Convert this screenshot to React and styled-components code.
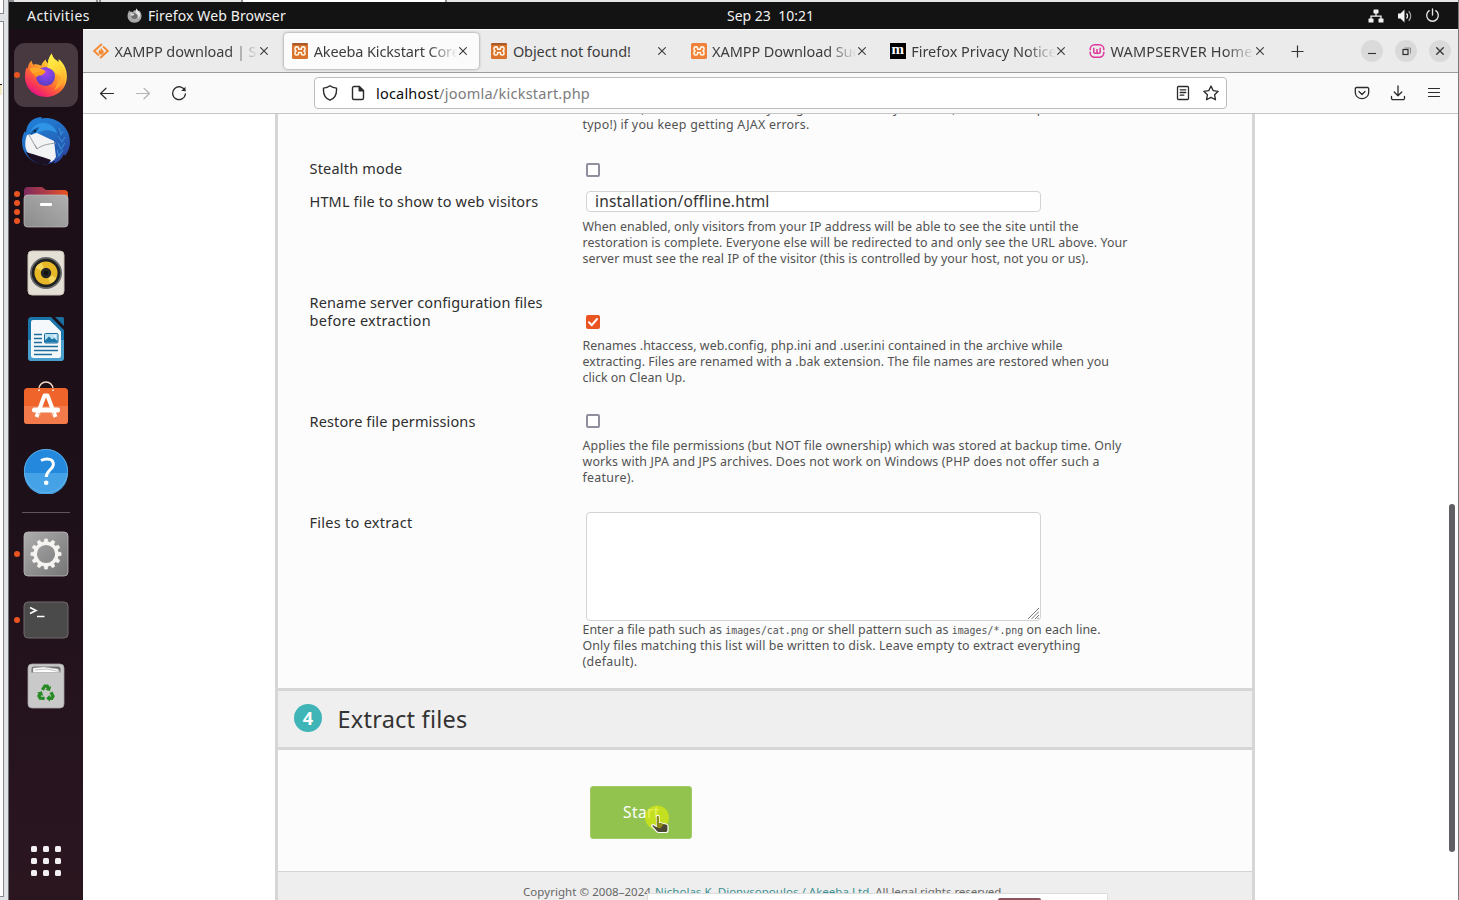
import React from "react";
import styled, { createGlobalStyle, css } from "styled-components";

const GlobalStyle = createGlobalStyle`
  *, *::before, *::after { box-sizing: border-box; }
  html, body { margin: 0; padding: 0; overflow: hidden; background: #dfe3e6; }
  body { font-family: "Noto Sans", "Open Sans", sans-serif; color: #333; }
  svg { display: block; flex: none; }
`;

/* ---------- frame ---------- */

const Screen = styled.div`
  width: 1459px;
  height: 900px;
  display: grid;
  grid-template-columns: 9px 1449px 1px;
  background: #dfe3e6;
  overflow: hidden;
`;

const BackWindow = styled.div`
  display: flex;
  flex-direction: column;
  gap: 7px;
  border-right: 1px solid #6f7275;
`;

const BackPane = styled.div`
  width: 4px;
  height: ${(p) => p.$h}px;
  background: #fdfdfd;
  border: solid #85888c;
  border-width: ${(p) => (p.$first ? "0 1px 1px 0" : "1px 1px 1px 0")};
  padding-top: ${(p) => (p.$first ? 0 : 62)}px;
`;

const BackMark = styled.div`
  width: 2px;
  height: 11px;
  background: #f5ecc8;
  border-top: 1px solid #111;
`;

const RightEdge = styled.div`
  background: #77797c;
`;

const Desktop = styled.div`
  display: grid;
  grid-template-rows: 2px 27px 871px;
  min-width: 0;
`;

const TopStrip = styled.div`
  display: flex;
  gap: 2px;
  padding-left: 5px;
  background: #8d9194;
`;

const StripPart = styled.div`
  width: ${(p) => p.$w}px;
  background: ${(p) => p.$c};
`;

const Label = styled.span`
  white-space: pre;
  letter-spacing: ${(p) => p.$ls || 0}px;
`;

const TopBar = styled.header`
  display: grid;
  grid-template-columns: 1fr auto 1fr;
  align-items: center;
  background: #131313;
  color: #f2f2f2;
  font-size: 14px;
  line-height: 26px;
`;

const TopLeft = styled.div`
  display: flex;
  align-items: center;
  padding-left: 18px;
`;

const AppName = styled.div`
  display: flex;
  align-items: center;
  gap: 6px;
  margin-left: 37px;
`;

const Clock = styled.div`
  margin-left: 74px;
`;

const Tray = styled.div`
  display: flex;
  justify-content: flex-end;
  align-items: center;
  gap: 12.5px;
  padding-right: 18px;
`;

const Body = styled.div`
  display: grid;
  grid-template-columns: 74px 1375px;
`;

/* ---------- dock ---------- */

const Dock = styled.nav`
  display: flex;
  flex-direction: column;
  align-items: center;
  padding-top: 14px;
  height: 871px;
  background: linear-gradient(#1b0e17, #1e1019 55%, #2b1620);
`;

const DockItem = styled.div`
  display: grid;
  grid-template-columns: 5px 64px 5px;
  align-items: center;
  width: 74px;
  height: 64px;
  margin-bottom: 2px;
`;

const Dots = styled.div`
  display: flex;
  flex-direction: column;
  gap: 3px;
  padding-left: 5px;
  width: 12px;
  z-index: 1;
`;

const Dot = styled.i`
  width: 6px;
  height: 6px;
  border-radius: 50%;
  background: #e95420;
`;

const DockTile = styled.div`
  display: grid;
  place-items: center;
  width: 64px;
  height: 64px;
  border-radius: 11px;
  background: ${(p) => (p.$active ? "#47393f" : "transparent")};
`;

const DockRule = styled.div`
  width: 48px;
  height: 1px;
  margin: 7px 0 9px;
  background: #5f555b;
`;

const AppGrid = styled.div`
  display: grid;
  grid-template-columns: repeat(3, 6px);
  gap: 6px;
  margin-top: 126px;
`;

const AppDot = styled.i`
  height: 6px;
  border-radius: 1.5px;
  background: #f1eff0;
`;

/* ---------- browser chrome ---------- */

const Browser = styled.main`
  display: grid;
  grid-template-rows: 44px 41px 786px;
  background: #fff;
`;

const TabBar = styled.div`
  display: flex;
  align-items: center;
  padding-left: 2px;
  background: #ebebeb;
  border-top: 1px solid #fff;
  border-bottom: 1px solid #9c9c9c;
  font-size: 14.5px;
  color: #3d3d3d;
`;

const Tab = styled.div`
  display: flex;
  align-items: center;
  width: 195px;
  height: 36px;
  margin-right: 4.2px;
  padding: 0 12px 0 8px;
  border-radius: 4px;
  ${(p) =>
    p.$active &&
    css`
      background: #fbfbfb;
      box-shadow: 0 0 3px rgba(0, 0, 0, 0.45);
    `}
`;

const TabTitle = styled.div`
  flex: 1;
  margin: 0 1px 0 5.500px;
  overflow: hidden;
  white-space: nowrap;
  ${(p) =>
    p.$fade &&
    css`
      mask-image: linear-gradient(90deg, #000 calc(100% - 30px), transparent);
    `}
`;

const NewTab = styled.div`
  margin-left: 11px;
`;

const WindowButtons = styled.div`
  display: flex;
  gap: 12px;
  margin-left: auto;
  padding-right: 7px;
`;

const WindowButton = styled.div`
  display: grid;
  place-items: center;
  width: 22px;
  height: 22px;
  border-radius: 50%;
  background: #dadada;
`;

const Toolbar = styled.div`
  display: grid;
  grid-template-columns: 231px 913px 1fr;
  align-items: center;
  background: #fafafa;
  border-bottom: 1px solid #c6c6c6;
`;

const NavButtons = styled.div`
  display: flex;
  gap: 20px;
  padding-left: 16px;
`;

const UrlBar = styled.div`
  display: flex;
  align-items: center;
  height: 32px;
  padding: 0 7px 0 7px;
  background: #fff;
  border: 1px solid #bdbdbd;
  border-radius: 4px;
  font-size: 14.5px;
`;

const UrlText = styled.div`
  flex: 1;
  margin-left: 10px;
  color: #7c7c7c;
`;

const Host = styled(Label)`
  color: #0c0c0c;
`;

const UrlIcons = styled.div`
  display: flex;
  gap: 12px;
`;

const ShieldSlot = styled.div`
  margin-right: 12px;
`;

const ToolIcons = styled.div`
  display: flex;
  justify-content: flex-end;
  gap: 20px;
  padding-right: 16px;
`;

/* ---------- page ---------- */

const Page = styled.section`
  display: flex;
  height: 786px;
  overflow: hidden;
`;

const Sheet = styled.div`
  width: 980px;
  height: 786px;
  margin-left: 192px;
  background: #fcfcfc;
  border: solid #d6d6d6;
  border-width: 0 3px;
`;

const ScrollTrack = styled.div`
  margin-left: auto;
  padding: 390px 3px 0 0;
`;

const ScrollThumb = styled.div`
  width: 6px;
  height: 348px;
  border-radius: 3px;
  background: #606064;
`;

const FormArea = styled.div`
  height: 574px;
  overflow: hidden;
`;

const Row = styled.div`
  display: grid;
  grid-template-columns: 273px 1fr;
  height: ${(p) => p.$h}px;
  padding-left: 31.5px;
`;

const RowLabel = styled.div`
  margin-top: ${(p) => (p.$top || 0) - 1}px;
  font-size: 14.5px;
  line-height: 18px;
  color: #2e2e2e;
  display: flex;
  flex-direction: column;
`;

const Field = styled.div`
  display: flex;
  flex-direction: column;
  align-items: flex-start;
  padding-top: ${(p) => p.$top || 0}px;
`;

const Help = styled.div`
  display: flex;
  flex-direction: column;
  margin-top: ${(p) => p.$top || 0}px;
  font-size: 12.4px;
  line-height: 16px;
  color: #525252;
`;

const HelpLine = styled.div`
  white-space: pre;
  height: 16px;
  letter-spacing: ${(p) => p.$ls || 0}px;
`;

const Code = styled.code`
  font-family: "DejaVu Sans Mono", monospace;
  font-size: 9.9px;
  letter-spacing: ${(p) => p.$ls || 0}px;
`;

const Checkbox = styled.div`
  display: grid;
  place-items: center;
  width: 14px;
  height: 14px;
  margin-left: 3.5px;
  border-radius: 2px;
  border: ${(p) => (p.$checked ? "0" : "2px solid #8f8f9d")};
  background: ${(p) => (p.$checked ? "#e95420" : "#fff")};
`;

const TextInput = styled.div`
  width: 455px;
  height: 21px;
  margin-left: 3.5px;
  padding-left: 8px;
  background: #fff;
  border: 1px solid #d3d3d3;
  border-radius: 4px;
  font-size: 15.5px;
  line-height: 19px;
  color: #333;
`;

const TextArea = styled.div`
  display: flex;
  justify-content: flex-end;
  align-items: flex-end;
  width: 455px;
  height: 109px;
  margin-left: 3.5px;
  padding: 1px;
  background: #fff;
  border: 1px solid #d3d3d3;
  border-radius: 4px;
`;

const StepHeader = styled.div`
  display: flex;
  align-items: center;
  gap: 15.5px;
  height: 62px;
  padding: 0 0 3px 16px;
  background: #efefef;
  border: solid #d6d6d6;
  border-width: 3px 0;
`;

const StepNumber = styled.div`
  width: 28px;
  height: 28px;
  border-radius: 50%;
  background: #40b5b8;
  color: #fff;
  font-size: 18px;
  font-weight: 700;
  line-height: 28px;
  text-align: center;
`;

const StepTitle = styled.h2`
  margin: 2px 0 0;
  font-size: 23.5px;
  font-weight: 400;
  line-height: 30px;
  letter-spacing: 0.23px;
  color: #333;
`;

const StepBody = styled.div`
  height: 121px;
  padding: 36px 0 0 312px;
`;

const StartButton = styled.div`
  position: relative;
  width: 102px;
  height: 53px;
  padding-left: 32px;
  background: #93c34f;
  border: 1px solid #a3cc69;
  border-radius: 3px;
  color: #fff;
  font-size: 15.5px;
  line-height: 51px;
`;

const Pointer = styled.div`
  position: absolute;
  left: 53px;
  top: 17px;
`;

const Footer = styled.footer`
  position: relative;
  height: 29px;
  padding: 12px 0 0 245px;
  background: #eee;
  border-top: 1px solid #d3d3d3;
  color: #666;
  font-size: 11.5px;
  line-height: 16px;
  white-space: pre;
`;

const FooterLink = styled(Label)`
  margin-left: 4px;
  color: #3c9092;
`;

const Notice = styled.div`
  position: absolute;
  left: 369px;
  top: 21px;
  width: 461px;
  height: 8px;
  padding: 4px 66px 0 0;
  background: #fff;
  border: 1px solid #dcdcdc;
  border-bottom: 0;
`;

const NoticeTab = styled.div`
  width: 43px;
  height: 3px;
  margin-left: auto;
  border-radius: 2px 2px 0 0;
  background: #8e5660;
`;

/* ---------- icons ---------- */

const FirefoxIcon = () => (
  <svg width="44" height="46" viewBox="0 0 44 46">
    <defs>
      <linearGradient id="fxBody" x1="0.8" y1="0.1" x2="0.25" y2="0.95">
        <stop offset="0" stopColor="#fff04a" />
        <stop offset="0.35" stopColor="#ffb32c" />
        <stop offset="0.6" stopColor="#ff6a32" />
        <stop offset="0.85" stopColor="#f7325c" />
        <stop offset="1" stopColor="#e21587" />
      </linearGradient>
      <radialGradient id="fxGlobe" cx="0.5" cy="0.3" r="0.75">
        <stop offset="0" stopColor="#a844ee" />
        <stop offset="0.55" stopColor="#7143dc" />
        <stop offset="1" stopColor="#5a3bb8" />
      </radialGradient>
      <linearGradient id="fxFlame" x1="0.3" y1="0" x2="0.7" y2="1">
        <stop offset="0" stopColor="#fff44c" />
        <stop offset="0.5" stopColor="#ffd536" />
        <stop offset="1" stopColor="#ff9a2a" />
      </linearGradient>
    </defs>
    <path d="M27.8 1.5c.6 4.200 3.500 6.300 6.800 8.600.1-1.200-.1-2 .1-3 5.500 4.500 8.200 10.700 8.200 17.400C42.900 36.300 33.600 45 22 45S1 36.200 1 24.800c0-4 .6-6.800 1.600-9.200l1.200.8c.2-3.200 1.600-5.900 3.700-8 .4 2 1 3.300 1.900 4.300 2.600-.9 5.400-.5 7.900 1 .8-2.600 2.400-4.600 4.600-6.100 0 1.700.7 2.600 1.700 3.800.6-3.900 2-7.300 4.200-9.900z" fill="url(#fxBody)" />
    <circle cx="21.500" cy="24.500" r="9.500" fill="url(#fxGlobe)" />
    <path d="M9.400 17.200c4.600.2 9.500 1.300 12.300 2.200-1.500 2.600-4 4.300-7.300 4.200-1.600 2.200-3.200 1.200-4.200-.3-.9-1.700-1.200-3.900-.8-6.100z" fill="#ff9820" />
    <path d="M5.300 16.500c3.800-1.900 8-.9 12.900.8 1.600.6 2.600 1.300 3.500 2.100-5.100-.7-9.300.2-13.200 2.400z" fill="#ffa82b" />
    <path d="M27.800 1.500c.6 4.200 3.500 6.300 6.800 8.600 4.500 3.500 6.700 9 5.700 14.900-1 6.400-5 11.200-10.300 13.200 3.700-5.100 4.800-11.400 1.600-16.900-1.500-2.700-4.200-4.600-8-5.600-.1-5.600 1.300-10.600 4.200-14.200z" fill="url(#fxFlame)" opacity="0.9" />
    <path d="M31 21c2 5 .7 10.500-4.300 13.600 4.900.1 9.300-3 10.300-9.600" fill="#ff8a2d" opacity="0.45" />
  </svg>
);

const FirefoxSmall = () => (
  <svg width="15" height="15" viewBox="0 0 16 16">
    <path d="M10.500.6c.2 1.600 1 2.300 2.300 3.100l.1-1c1.700 1.500 2.600 3.500 2.600 5.800 0 4.100-3.300 7.200-7.500 7.200S.6 12.600.6 8.500c0-1.500.2-2.700.8-3.700.2-1 .6-1.700 1.200-2.400.2.800.4 1.300.8 1.600.9-.3 2-.1 2.900.4.4-1 .9-1.700 1.800-2.200 0 .6.3 1 .7 1.300.2-1.200.8-2.200 1.700-2.900z" fill="#a9a9a9" />
    <circle cx="7.800" cy="8.400" r="3.200" fill="#6d6d6d" />
    <path d="M3 6c2-.6 3.500-.1 4.900.6-.6 1.200-1.800 1.600-3 1.600z" fill="#d8d8d8" />
    <path d="M10.500.6c.2 1.600 1 2.300 2.300 3.100 1.600 2 1.800 5.200-.6 7.800.3-3-.7-5-3.100-6-.2-2 .3-3.700 1.400-4.900z" fill="#e4e4e4" />
  </svg>
);

const ThunderbirdIcon = () => (
  <svg width="50" height="50" viewBox="0 0 50 50">
    <defs>
      <linearGradient id="tbBody" x1="0.2" y1="0" x2="0.8" y2="1">
        <stop offset="0" stopColor="#1f80d8" />
        <stop offset="0.55" stopColor="#2469bd" />
        <stop offset="1" stopColor="#2b3f9c" />
      </linearGradient>
    </defs>
    <path d="M10 5c4-3 7-4 11-4l-1 1.500C34-.5 49 10 49 26c0 5-2 10-5 14l-1-2c-2 5-6 8-10 10l1-3c-4 3-9 4-14 3C8 46 1 36 1 26c0-4 1-8 3-11l1 2c0-5 2-9 5-12z" fill="url(#tbBody)" />
    <path d="M9 17C12 8 21 4 30 9c3 2 5 5 6 8-6-3-11-4-17-1-4 2-7 3-10 1z" fill="#2f93e6" />
    <path d="M6 19l10-2 17 8 2 16c-1 2-3 4-5 5L7 37C3 32 4 24 6 19z" fill="#f2f3f5" />
    <path d="M8 19l8 14c5-4 11-5 19-6M16 33l-2-4" fill="none" stroke="#8f9298" strokeWidth="0.9" />
    <path d="M5 36c6 2 14 4 25 8l-3 4C17 50 8 44 5 36z" fill="#1c1025" />
    <path d="M9 18c2-4 5-6 9-7-1 3-3 6-8 8z" fill="#135aa3" />
    <circle cx="14" cy="15" r="1.200" fill="#0b2748" />
    <path d="M36 12c7 6 9 14 6 22-2 6-5 8-8 9 2-3 3-7 2-12 1-6 2-12 0-19z" fill="#235fb4" />
    <path d="M38 12l2 7 2-4M37 20l4 6 3-5M37 27l3 6 4-6M36 34l2 6 4-6" fill="none" stroke="#3f93dc" strokeWidth="1.100" opacity="0.8" />
  </svg>
);

const FilesIcon = () => (
  <svg width="46" height="42" viewBox="0 0 46 42">
    <defs>
      <linearGradient id="flBack" x1="0" x2="1">
        <stop offset="0" stopColor="#7d2a5c" />
        <stop offset="0.5" stopColor="#b03c48" />
        <stop offset="1" stopColor="#e95420" />
      </linearGradient>
      <linearGradient id="flFront" x1="0" y1="1" x2="1" y2="0">
        <stop offset="0" stopColor="#8b8b8b" />
        <stop offset="1" stopColor="#b0b0b0" />
      </linearGradient>
    </defs>
    <path d="M1 5a4 4 0 0 1 4-4h14l4 3h18a4 4 0 0 1 4 4v14H1z" fill="url(#flBack)" />
    <rect x="1" y="9" width="44" height="32" rx="3.500" fill="url(#flFront)" stroke="#c1bfbf" strokeWidth="0.700" />
    <rect x="17" y="17" width="12" height="3" rx="1" fill="#fff" />
  </svg>
);

const RhythmboxIcon = () => (
  <svg width="38" height="46" viewBox="0 0 38 46">
    <rect x="1" y="1" width="36" height="44" rx="4" fill="#e5e0d5" stroke="#c9c3b8" strokeWidth="1" />
    <circle cx="19" cy="23" r="16" fill="#68696a" />
    <circle cx="19" cy="23" r="14.300" fill="#202122" />
    <circle cx="19" cy="23" r="11.500" fill="#e7b928" />
    <path d="M19 23L8.500 18a11.500 11.500 0 0 1 6-5.600z" fill="#f5d55a" />
    <path d="M19 23l10.500 5a11.500 11.500 0 0 1-6 5.600z" fill="#f5d55a" />
    <circle cx="19" cy="23" r="5.200" fill="#252526" />
    <circle cx="19" cy="23" r="2.200" fill="#101010" />
  </svg>
);

const WriterIcon = () => (
  <svg width="38" height="46" viewBox="0 0 38 46">
    <path d="M4.500 1H24l13 13v27.500a3.500 3.500 0 0 1-3.500 3.500h-29A3.500 3.500 0 0 1 1 41.500v-37A3.500 3.500 0 0 1 4.500 1z" fill="#1a76a9" />
    <path d="M1 24h36v17.500a3.500 3.500 0 0 1-3.500 3.500h-29A3.500 3.500 0 0 1 1 41.500z" fill="#4aa0cc" />
    <path d="M28 1h7.500A1.500 1.500 0 0 1 37 2.500V10z" fill="#1a6f9f" />
    <path d="M6 4h16.500L34 15.500V39.500a2.500 2.500 0 0 1-2.500 2.500H6.500A2.500 2.500 0 0 1 4 39.500V6a2 2 0 0 1 2-2z" fill="#f5f8fa" />
    <path d="M7 18.500h8M7 22.500h8M7 26.500h8M7 30.500h24M7 34.500h24M7 38.500h18" stroke="#1b6d9b" strokeWidth="1.700" />
    <rect x="17.500" y="17.500" width="13.500" height="9.500" rx="1" fill="#b9e0f3" stroke="#1b6d9b" strokeWidth="1" />
    <path d="M18 26.500v-2l4-4 3 3 2-1.500 3.500 3v1.500z" fill="#1b76a9" />
    <circle cx="28" cy="20" r="1.100" fill="#f5f8fa" />
  </svg>
);

const SoftwareIcon = () => (
  <svg width="46" height="48" viewBox="0 0 46 48">
    <path d="M16 10V8a7 7 0 0 1 14 0v2" fill="none" stroke="#f6d9c7" strokeWidth="1.600" />
    <rect x="1" y="7" width="44" height="36" rx="3.500" fill="#ef642b" />
    <path d="M1 25h44v14.500a3.500 3.500 0 0 1-3.500 3.500h-37A3.500 3.500 0 0 1 1 39.500z" fill="#f37b4b" />
    <path d="M16 10V8.500M30 10V8.500" stroke="#fff" strokeWidth="1.600" />
    <path d="M13.500 36L21.500 14.500h3L32.500 36" fill="none" stroke="#fff" strokeWidth="4" strokeLinejoin="round" />
    <rect x="9" y="26.500" width="28" height="5" rx="2.500" fill="#fff" />
    <path d="M15 32.500l3 1M28 33.500l3-1" stroke="#f1a584" strokeWidth="1" />
  </svg>
);

const HelpIcon = () => (
  <svg width="46" height="46" viewBox="0 0 46 46">
    <circle cx="23" cy="23" r="22" fill="#2489dc" />
    <path d="M1 25a22 22 0 0 0 44 0z" fill="#45a2e6" />
    <circle cx="23" cy="23" r="21.600" fill="none" stroke="#67b3ea" strokeWidth="0.800" />
    <path d="M18 12.500c6.500-3.300 12.800-1 12.300 4.300-.4 4.700-7 5.700-7 12.200" fill="none" stroke="#fff" strokeWidth="3" />
    <circle cx="23.200" cy="34.800" r="2.300" fill="#fff" />
  </svg>
);

const TEETH = [0, 30, 60, 90, 120, 150, 180, 210, 240, 270, 300, 330];

const SettingsIcon = () => (
  <svg width="46" height="46" viewBox="0 0 46 46">
    <defs>
      <linearGradient id="stBack" x1="0" y1="0" x2="1" y2="1">
        <stop offset="0" stopColor="#adadad" />
        <stop offset="1" stopColor="#757575" />
      </linearGradient>
    </defs>
    <rect x="1" y="1" width="44" height="44" rx="4" fill="url(#stBack)" stroke="#bcbaba" strokeWidth="0.800" />
    <circle cx="23" cy="23" r="10.800" fill="none" stroke="#f6f4f1" strokeWidth="3.400" />
    {TEETH.map((a) => (
      <path key={a} d="M21 11.500l.6-3.600h2.800l.6 3.600z" fill="#f6f4f1" stroke="#f6f4f1" strokeWidth="0.600" transform={`rotate(${a} 23 23)`} />
    ))}
  </svg>
);

const TerminalIcon = () => (
  <svg width="46" height="38" viewBox="0 0 46 38">
    <rect x="1" y="1" width="44" height="36" rx="4" fill="#4a4a4a" stroke="#6e6a6c" strokeWidth="1" />
    <path d="M7 6.500l6 3-6 3" fill="none" stroke="#fff" strokeWidth="1.600" />
    <path d="M14 15.500h7.500" stroke="#fff" strokeWidth="1.500" />
  </svg>
);

const RECYCLE = [0, 120, 240];

const TrashIcon = () => (
  <svg width="38" height="46" viewBox="0 0 38 46">
    <rect x="1" y="1" width="36" height="44" rx="4" fill="#c9c9c9" stroke="#a5a3a4" strokeWidth="0.800" />
    <path d="M4.500 9.500V6a2.500 2.500 0 0 1 2.500-2.500h24A2.500 2.500 0 0 1 33.500 6v3.500z" fill="#6e6e6e" />
    <path d="M6 9.500V5l11-1 14 2 2 3.500z" fill="#fdfdfd" stroke="#aaa" strokeWidth="0.500" />
    <path d="M8 7l12-1 12 2.500" fill="none" stroke="#999" strokeWidth="0.600" />
    {RECYCLE.map((a) => (
      <g key={a} fill="#278a24" transform={`rotate(${a} 19 30.500)`}>
        <path d="M14 26l3-4.500h4.200l1.500 2.400 1.600-.9-1.400 5-4.700-1.200 1.600-.9-1-1.600-2 3.400z" />
      </g>
    ))}
  </svg>
);

const SourceForgeIcon = () => (
  <svg width="16" height="16" viewBox="0 0 16 16">
    <path d="M8.800 1L1.200 8l4.800 4.600M7.200 15L14.800 8 10 3.400" fill="none" stroke="#f58a35" strokeWidth="1.900" />
    <path d="M8.200 4.500c.2 2 2.500 2.400 2.500 4.500a2.600 2.600 0 0 1-5.200 0c0-1.200.6-1.700 1-2.400.2.700.4 1 .9 1.200.4-1.300.2-2.200.8-3.300z" fill="#f58a35" />
  </svg>
);

const XamppIcon = ({ dark }) => (
  <svg width="16" height="16" viewBox="0 0 16 16">
    <rect width="16" height="16" rx="1.500" fill={dark ? "#d9722c" : "#f0813a"} />
    {dark && <path d="M0 1.500A1.500 1.500 0 0 1 1.500 0h13A1.500 1.500 0 0 1 16 1.500V2H0z" fill="#a85a28" />}
    <path d="M6.600 6.300V5.300a1.400 1.400 0 0 0-1.400-1.400H4.400A1.500 1.500 0 0 0 3 5.400v.8C3 7.200 3.500 8 4.300 8 3.500 8 3 8.700 3 9.700v.8A1.500 1.500 0 0 0 4.400 12h.8a1.400 1.400 0 0 0 1.400-1.400V9.500h2.800v1.100a1.400 1.400 0 0 0 1.400 1.400h.8a1.500 1.500 0 0 0 1.400-1.500v-.8c0-1-.5-1.700-1.300-1.700.8 0 1.300-.8 1.300-1.800v-.8a1.500 1.500 0 0 0-1.400-1.500h-.8a1.400 1.400 0 0 0-1.400 1.400v1z" fill="none" stroke="#fff6e6" strokeWidth="1.600" strokeLinejoin="round" />
  </svg>
);

const MozillaBox = styled.div`
  width: 16px;
  height: 16px;
  flex: none;
  background: #000;
  color: #fff;
  font: 700 15px/12px "Liberation Serif", serif;
  text-align: center;
`;

const WampIcon = () => (
  <svg width="16" height="16" viewBox="0 0 16 16">
    <rect x="1.200" y="1.700" width="13.600" height="12.600" rx="4.500" fill="none" stroke="#e0359c" strokeWidth="1.500" />
    <path d="M0 8h2M14 8h2" stroke="#ebebeb" strokeWidth="1.500" />
    <path d="M4.800 4.800v4.200a1.300 1.300 0 0 0 1.300 1.300h3.800a1.300 1.300 0 0 0 1.300-1.300V4.800M8 6v4" fill="none" stroke="#e0359c" strokeWidth="1.500" />
  </svg>
);

const CloseIcon = ({ size = 8, w = 1.1 }) => (
  <svg width={size} height={size} viewBox="0 0 8 8">
    <path d="M.3.300l7.400 7.400M7.700.300L.3 7.700" stroke="#3a3a3a" strokeWidth={w} />
  </svg>
);

const Stroke = ({ d, color = "#2b2b2b", w = 1.3, size = 16, children }) => (
  <svg width={size} height={size} viewBox="0 0 16 16" fill="none" stroke={color} strokeWidth={w} strokeLinecap="round" strokeLinejoin="round">
    <path d={d} />
    {children}
  </svg>
);

const NetworkIcon = () => (
  <svg width="16" height="16" viewBox="0 0 16 16">
    <path d="M8 4v4M3 12V8.200h10V12" fill="none" stroke="#f2f2f2" strokeWidth="1.300" />
    <rect x="5.500" y="1.500" width="5" height="4" rx="0.500" fill="#f2f2f2" />
    <rect x="0.500" y="10.500" width="5" height="4" rx="0.500" fill="#f2f2f2" />
    <rect x="10.500" y="10.500" width="5" height="4" rx="0.500" fill="#f2f2f2" />
  </svg>
);

const VolumeIcon = () => (
  <svg width="16" height="16" viewBox="0 0 16 16">
    <path d="M1 5.500h2.500L7.500 1.500v13l-4-4H1z" fill="#f2f2f2" />
    <path d="M9.500 5.500a3.500 3.500 0 0 1 0 5" fill="none" stroke="#f2f2f2" strokeWidth="1.300" />
    <path d="M11.700 3.300a6.500 6.500 0 0 1 0 9.400" fill="none" stroke="#a5a5a5" strokeWidth="1.200" />
  </svg>
);

const HandCursor = () => (
  <svg width="30" height="30" viewBox="0 0 30 30">
    <circle cx="13" cy="13.500" r="12" fill="#dcea0a" fillOpacity="0.680" />
    <path d="M12.500 12.500c0-1.600 2.500-1.600 2.500 0v6l7 1.500c1.500.3 2 1 2 2v4c0 1.500-.8 2.500-2 2.500h-7c-1.500 0-2-.6-3-1.600l-4-4.500c-1-1.300.8-2.400 2-1.500l2.500 1.600z" fill="#4a4733" stroke="#fff" strokeWidth="1.200" strokeLinejoin="round" />
    <path d="M12.600 20v-7c.1-1.200 2.200-1.200 2.300 0v6l5 1-3.500 4.500-3.400-1z" fill="#8c8a15" />
  </svg>
);

/* ---------- data ---------- */

const DOCK_TOP = [
  { id: "firefox", icon: <FirefoxIcon />, dots: 1, active: true },
  { id: "thunderbird", icon: <ThunderbirdIcon />, dots: 0 },
  { id: "files", icon: <FilesIcon />, dots: 4 },
  { id: "rhythmbox", icon: <RhythmboxIcon />, dots: 0 },
  { id: "writer", icon: <WriterIcon />, dots: 0 },
  { id: "software", icon: <SoftwareIcon />, dots: 0 },
  { id: "help", icon: <HelpIcon />, dots: 0 },
];

const DOCK_BOTTOM = [
  { id: "settings", icon: <SettingsIcon />, dots: 1 },
  { id: "terminal", icon: <TerminalIcon />, dots: 1 },
  { id: "trash", icon: <TrashIcon />, dots: 0 },
];

const TABS = [
  { title: "XAMPP download | SourceForge", icon: <SourceForgeIcon />, ls: -0.06, fade: true },
  { title: "Akeeba Kickstart Core 8.0.4", icon: <XamppIcon dark />, ls: -0.13, fade: true, active: true },
  { title: "Object not found!", icon: <XamppIcon dark />, ls: -0.08 },
  { title: "XAMPP Download Success", icon: <XamppIcon />, ls: -0.09, fade: true },
  { title: "Firefox Privacy Notice —", icon: <MozillaBox>m</MozillaBox>, ls: -0.03, fade: true },
  { title: "WAMPSERVER Homepage", icon: <WampIcon />, ls: 0.15, fade: true },
];

const DockEntry = ({ item }) => (
  <DockItem>
    <Dots>
      {Array.from({ length: item.dots }, (_, i) => (
        <Dot key={i} />
      ))}
    </Dots>
    <DockTile $active={item.active}>{item.icon}</DockTile>
  </DockItem>
);

export default function App() {
  return (
    <Screen>
      <GlobalStyle />
      <BackWindow>
        <BackPane $h={14} $first />
        <BackPane $h={876}>
          <BackMark />
        </BackPane>
      </BackWindow>
      <Desktop>
        <TopStrip>
          <StripPart $w={82} $c="#e6e6e6" />
          <StripPart $w={1} $c="#e6e6e6" />
          <StripPart $w={140} $c="#e6e6e6" />
          <StripPart $w={202} $c="#ffffff" />
          <StripPart $w={1011} $c="#e4e6e8" />
        </TopStrip>
        <TopBar>
          <TopLeft>
            <Label $ls={0.46}>Activities</Label>
            <AppName>
              <FirefoxSmall />
              <Label $ls={0.13}>Firefox Web Browser</Label>
            </AppName>
          </TopLeft>
          <Clock>
            <Label>{"Sep 23  10:21"}</Label>
          </Clock>
          <Tray>
            <NetworkIcon />
            <VolumeIcon />
            <Stroke size={15} color="#e8e8e8" w={1.4} d="M8 1v6.500M4.500 2.800a6.200 6.200 0 1 0 7 0" />
          </Tray>
        </TopBar>
        <Body>
          <Dock>
            {DOCK_TOP.map((item) => (
              <DockEntry key={item.id} item={item} />
            ))}
            <DockRule />
            {DOCK_BOTTOM.map((item) => (
              <DockEntry key={item.id} item={item} />
            ))}
            <AppGrid>
              {Array.from({ length: 9 }, (_, i) => (
                <AppDot key={i} />
              ))}
            </AppGrid>
          </Dock>
          <Browser>
            <TabBar>
              {TABS.map((tab) => (
                <Tab key={tab.title} $active={tab.active}>
                  {tab.icon}
                  <TabTitle $fade={tab.fade}>
                    <Label $ls={tab.ls}>{tab.title}</Label>
                  </TabTitle>
                  <CloseIcon />
                </Tab>
              ))}
              <NewTab>
                <svg width="13" height="13" viewBox="0 0 13 13">
                  <path d="M6.500.5v12M.5 6.500h12" stroke="#333" strokeWidth="1.200" />
                </svg>
              </NewTab>
              <WindowButtons>
                <WindowButton>
                  <svg width="8" height="8" viewBox="0 0 8 8">
                    <path d="M0 6.500h8" stroke="#2f2f2f" strokeWidth="1.100" />
                  </svg>
                </WindowButton>
                <WindowButton>
                  <svg width="9" height="9" viewBox="0 0 9 9" fill="none">
                    <path d="M2.500 1h6v5.500" stroke="#8b8b8b" strokeWidth="1" />
                    <rect x="1" y="2.500" width="5" height="5" stroke="#2f2f2f" strokeWidth="1.200" />
                  </svg>
                </WindowButton>
                <WindowButton>
                  <CloseIcon size={8} w={1.4} />
                </WindowButton>
              </WindowButtons>
            </TabBar>
            <Toolbar>
              <NavButtons>
                <Stroke w={1.2} d="M14.500 8.500H1.500M7 3.200L1.500 8.500 7 13.800" />
                <Stroke w={1.2} color="#b4b4b4" d="M1.500 8.500h13M9 3.200L14.500 8.500 9 13.800" />
                <Stroke d="M14 5.800A6.400 6.400 0 1 0 14.400 9">
                  <path d="M14.500 1.800v4.300h-4.300z" fill="#2b2b2b" stroke="none" />
                </Stroke>
              </NavButtons>
              <UrlBar>
                <ShieldSlot>
                  <Stroke w={1.4} d="M8 .8c2 1.500 4 2.100 6.500 2.300.4 5.400-1.400 10.200-6.500 12.100C2.900 13.300 1.100 8.500 1.500 3.100 4 2.900 6 2.300 8 .8z" />
                </ShieldSlot>
                <Stroke w={1.4} d="M4 1.500h5.200l4.300 4.300v7.200a1.500 1.500 0 0 1-1.500 1.500H4A1.500 1.500 0 0 1 2.500 13V3A1.500 1.500 0 0 1 4 1.500z">
                  <path d="M9.200 1.500v4.300h4.300z" fill="#2b2b2b" />
                </Stroke>
                <UrlText>
                  <Host $ls={0.2}>localhost</Host>
                  <Label $ls={0.24}>/joomla/kickstart.php</Label>
                </UrlText>
                <UrlIcons>
                  <Stroke d="M3.500 1.500h9a1 1 0 0 1 1 1v11a1 1 0 0 1-1 1h-9a1 1 0 0 1-1-1v-11a1 1 0 0 1 1-1zM5.200 4.800h5.600M5.200 7.500h5.600M5.200 10.200h3.600" />
                  <Stroke d="M8 1l2.200 4.600 5 .7-3.600 3.500.9 5L8 12.400l-4.500 2.400.9-5L.8 6.300l5-.7z" />
                </UrlIcons>
              </UrlBar>
              <ToolIcons>
                <Stroke d="M2.500 2.500h11a1.200 1.200 0 0 1 1.200 1.200V7.500a6.700 6.200 0 0 1-13.400 0V3.700a1.200 1.200 0 0 1 1.200-1.200zM5 6.500l3 3 3-3" />
                <Stroke d="M8 .8v9.700M4.200 7L8 10.700 11.800 7M1.500 11.500v1.700a1.500 1.500 0 0 0 1.500 1.500h10a1.500 1.500 0 0 0 1.500-1.500v-1.700" />
                <Stroke w={1.2} d="M2.500 3.500h11M2.500 7.500h11M2.500 11.500h11" />
              </ToolIcons>
            </Toolbar>
            <Page>
              <Sheet>
                <FormArea>
                  <Row $h={46}>
                    <RowLabel />
                    <Field>
                      <Help $top={-13}>
                        <HelpLine $ls={0.05}>Be careful, do not add or set anything unless asked by our staff, but it is a simple</HelpLine>
                        <HelpLine $ls={0.245}>typo!) if you keep getting AJAX errors.</HelpLine>
                      </Help>
                    </Field>
                  </Row>
                  <Row $h={31}>
                    <RowLabel>
                      <Label $ls={0.195}>Stealth mode</Label>
                    </RowLabel>
                    <Field $top={3}>
                      <Checkbox />
                    </Field>
                  </Row>
                  <Row $h={103}>
                    <RowLabel $top={2}>
                      <Label $ls={0.155}>HTML file to show to web visitors</Label>
                    </RowLabel>
                    <Field>
                      <TextInput>
                        <Label $ls={0.16}>installation/offline.html</Label>
                      </TextInput>
                      <Help $top={7}>
                        <HelpLine $ls={0.068}>When enabled, only visitors from your IP address will be able to see the site until the</HelpLine>
                        <HelpLine $ls={0.096}>restoration is complete. Everyone else will be redirected to and only see the URL above. Your</HelpLine>
                        <HelpLine $ls={0.066}>server must see the real IP of the visitor (this is controlled by your host, not you or us).</HelpLine>
                      </Help>
                    </Field>
                  </Row>
                  <Row $h={119}>
                    <RowLabel>
                      <Label $ls={0.11}>Rename server configuration files</Label>
                      <Label $ls={0.27}>before extraction</Label>
                    </RowLabel>
                    <Field $top={21}>
                      <Checkbox $checked>
                        <svg width="14" height="14" viewBox="0 0 14 14">
                          <path d="M3 7.300l2.800 2.900L11 4" fill="none" stroke="#fff" strokeWidth="2" strokeLinecap="round" strokeLinejoin="round" />
                        </svg>
                      </Checkbox>
                      <Help $top={9}>
                        <HelpLine $ls={0.033}>Renames .htaccess, web.config, php.ini and .user.ini contained in the archive while</HelpLine>
                        <HelpLine $ls={0.067}>extracting. Files are renamed with a .bak extension. The file names are restored when you</HelpLine>
                        <HelpLine $ls={0.036}>click on Clean Up.</HelpLine>
                      </Help>
                    </Field>
                  </Row>
                  <Row $h={99}>
                    <RowLabel>
                      <Label $ls={0.13}>Restore file permissions</Label>
                    </RowLabel>
                    <Field $top={1}>
                      <Checkbox />
                      <Help $top={10}>
                        <HelpLine $ls={0.087}>Applies the file permissions (but NOT file ownership) which was stored at backup time. Only</HelpLine>
                        <HelpLine $ls={0.146}>works with JPA and JPS archives. Does not work on Windows (PHP does not offer such a</HelpLine>
                        <HelpLine $ls={0.3}>feature).</HelpLine>
                      </Help>
                    </Field>
                  </Row>
                  <Row $h={176}>
                    <RowLabel $top={2}>
                      <Label $ls={0.28}>Files to extract</Label>
                    </RowLabel>
                    <Field>
                      <TextArea>
                        <svg width="11" height="11" viewBox="0 0 11 11">
                          <path d="M0 11L11 0M3.500 11L11 3.500M7 11l4-4M9.500 11L11 9.500" stroke="#666" strokeWidth="0.900" />
                        </svg>
                      </TextArea>
                      <Help $top={1}>
                        <HelpLine $ls={0.035}>
                          {"Enter a file path such as "}
                          <Code>images/cat.png</Code>
                          {" or shell pattern such as "}
                          <Code $ls={0.02}>images/*.png</Code>
                          {" on each line."}
                        </HelpLine>
                        <HelpLine $ls={0.117}>Only files matching this list will be written to disk. Leave empty to extract everything</HelpLine>
                        <HelpLine $ls={0.3}>(default).</HelpLine>
                      </Help>
                    </Field>
                  </Row>
                </FormArea>
                <StepHeader>
                  <StepNumber>4</StepNumber>
                  <StepTitle>Extract files</StepTitle>
                </StepHeader>
                <StepBody>
                  <StartButton>
                    <Label $ls={0.4}>Start</Label>
                    <Pointer>
                      <HandCursor />
                    </Pointer>
                  </StartButton>
                </StepBody>
                <Footer>
                  <Label $ls={0.05}>Copyright © 2008–2024</Label>
                  <FooterLink $ls={0.03}>Nicholas K. Dionysopoulos / Akeeba Ltd</FooterLink>
                  <Label $ls={-0.04}>. All legal rights reserved.</Label>
                  <Notice>
                    <NoticeTab />
                  </Notice>
                </Footer>
              </Sheet>
              <ScrollTrack>
                <ScrollThumb />
              </ScrollTrack>
            </Page>
          </Browser>
        </Body>
      </Desktop>
      <RightEdge />
    </Screen>
  );
}
